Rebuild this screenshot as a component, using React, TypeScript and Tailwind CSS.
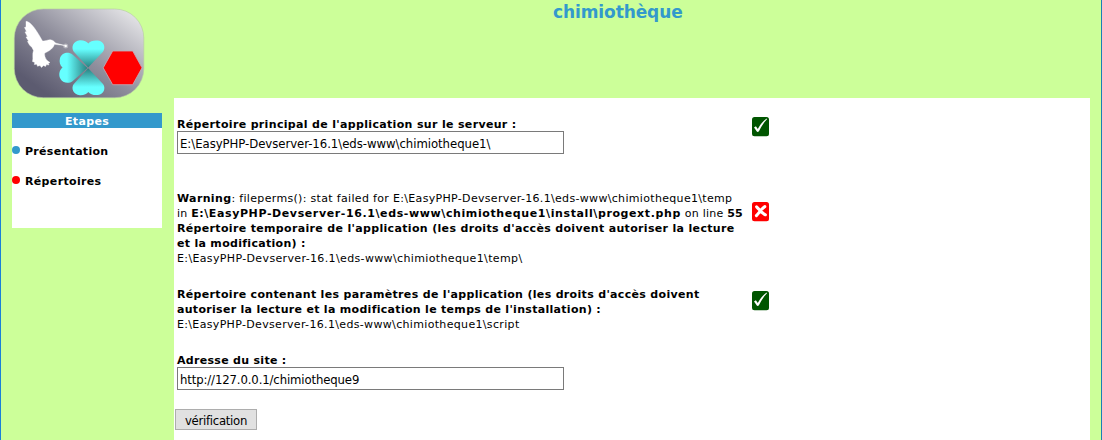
import type { ReactNode } from "react";

function Line({ children, className = "" }: { children: ReactNode; className?: string }) {
  return <div className={`h-[15px] whitespace-pre leading-[15px] ${className}`}>{children}</div>;
}

function CheckIcon() {
  return (
    <svg width="17" height="20" viewBox="0 0 17 20" className="block">
      <rect width="17" height="19.3" rx="2.5" fill="#005500" />
      <path d="M2 10.4 L3.9 9.2 L5.8 12 C8 7.8 11 4 14.6 1.6 L15 2.2 C11.6 5.8 9 9.8 6.8 14.6 L5.2 14.9 Z" fill="#fff" />
    </svg>
  );
}

function CrossIcon() {
  return (
    <svg width="17" height="20" viewBox="0 0 17 20" className="block">
      <rect width="17" height="19.3" rx="2.5" fill="#ff0000" />
      <path d="M4.6 4.8 C7 7 9.500 11 13.400 12.800 M12.800 4.600 C9.500 6.500 7.500 10.500 4.400 13.600" stroke="#fff" strokeWidth="3" strokeLinecap="round" fill="none" />
    </svg>
  );
}

function Logo() {
  return (
    <svg width="133" height="92" viewBox="12 8 133 92" className="block">
      <defs>
        <linearGradient id="back" x1="0.15" y1="0.85" x2="0.95" y2="0.1">
          <stop offset="0" stopColor="#5c5b70" />
          <stop offset="0.45" stopColor="#8f8e9c" />
          <stop offset="1" stopColor="#e2e2e5" />
        </linearGradient>
        <linearGradient id="top" gradientUnits="userSpaceOnUse" x1="88" y1="67" x2="88" y2="49">
          <stop offset="0" stopColor="#2b8484" />
          <stop offset="1" stopColor="#66ffff" />
        </linearGradient>
        <linearGradient id="bottom" gradientUnits="userSpaceOnUse" x1="88" y1="69" x2="88" y2="87">
          <stop offset="0" stopColor="#2b8484" />
          <stop offset="1" stopColor="#66ffff" />
        </linearGradient>
        <linearGradient id="left" gradientUnits="userSpaceOnUse" x1="87" y1="68" x2="67" y2="68">
          <stop offset="0" stopColor="#2b8484" />
          <stop offset="1" stopColor="#66ffff" />
        </linearGradient>
      </defs>
      <rect x="14.3" y="9" width="129.5" height="88.7" rx="29" fill="url(#back)" stroke="#b5c7a4" strokeWidth="0.6" />
      <path d="M26 21.3 C31 21.5 37 31 42.500 41 C45 41.500 48 39.500 50.500 39.800 C53 40 54.500 41.800 55.500 43 L65 45.500 L54.500 44.300 C52.500 50 48 51 44.500 53.500 C44.500 58 47 61 50 62.500 L48.300 63.400 L49 65 L46.500 64.600 L45.500 66.500 L43.500 65.500 L41.500 67.500 L40 65.500 L37.500 66.300 L36.800 64.200 L34.300 64.500 L34.800 62.400 L32.500 61.600 C33.500 58 32 54 33.500 50.500 L32 47.500 L29.500 45 L27.500 41.500 L28.500 41 L26 37 L27.500 36.800 L25 32 L26.500 31.600 L24.500 27.500 L26 27 Z" fill="#fff" stroke="#fff" strokeWidth="0.4" />
      <circle cx="65.7" cy="46" r="2.5" fill="#fff" fillOpacity="0.35" />
      <circle cx="65.7" cy="46" r="1.2" fill="#fff" />
      <path d="M88.2 67.500 L73.600 51.500 C71 47.500 73 41 80 40.300 C84 40.200 87 41.500 88.300 43.500 C90 41.200 94 40 98 40.600 C104 41.500 106 47.500 103 51.700 Z" fill="url(#top)" />
      <path d="M88.2 68.300 L73.600 84.300 C71 88.300 73 94.500 80 95.200 C84 95.300 87 94 88.300 92 C90 94.300 94 95.500 98 95 C104 94 106 88 103 84 Z" fill="url(#bottom)" />
      <path d="M87.5 67.900 L72.500 54.500 C69 51.500 62 52 60 58 C59 62 60 65.500 62.500 67.500 C59.500 70 58.500 74 60 78 C62.500 83.500 69 84 72.500 81.200 Z" fill="url(#left)" />
      <path d="M103.2 67.800 L112.700 51 H132.700 L142 67.800 L132.700 84.700 H112.700 Z" fill="#ff0000" stroke="#c3afb9" strokeWidth="0.8" />
    </svg>
  );
}

function Step({ color, children, className }: { color: string; children: string; className: string }) {
  return (
    <div className="flex h-[15px] items-center">
      <span className={`mr-[5px] mb-px h-2 w-2 rounded-full ${color}`} />
      <Line className={`pt-px font-bold ${className}`}>{children}</Line>
    </div>
  );
}

export default function App() {
  return (
    <div className="flex h-[440px] w-full overflow-hidden border-r border-l border-r-[#1a80b4] border-l-[#1a80d8] bg-[#ccff99] font-['DejaVu_Sans',sans-serif] text-[11px] text-black">
      <aside className="w-[173px] shrink-0 pl-[11px]">
        <div className="h-[113px] w-[133px] pt-2">
          <Logo />
        </div>
        <nav className="h-[115px] w-[150px] bg-white">
          <Line className="bg-[#3399cc] pt-px text-center font-bold tracking-[0.35px] text-white">Etapes</Line>
          <div className="flex flex-col gap-[15px] pt-[15px]">
            <Step color="bg-[#3399cc]" className="tracking-[0.3px]">Présentation</Step>
            <Step color="bg-[#ff0000]" className="tracking-[0.34px]">Répertoires</Step>
          </div>
        </nav>
      </aside>

      <div className="flex w-[916px] shrink-0 flex-col">
        <header className="h-[98px] pl-[379px]">
          <h1 className="pt-px text-[17px] leading-[22px] font-bold tracking-[-0.1px] text-[#3399cc]">chimiothèque</h1>
        </header>
        <main className="grow bg-white pt-[19px] pl-[3px]">
          <section className="flex h-[74px]">
            <div className="w-[575px]">
              <Line className="font-bold tracking-[0.333px]">Répertoire principal de l'application sur le serveur :</Line>
              <input
                className="mt-[-1px] block h-[23px] w-[387px] border border-[#7a7a7a] bg-white px-[2px] pt-[2px] font-['DejaVu_Sans_Condensed','DejaVu_Sans',sans-serif] text-[13px] tracking-[-0.04px] [font-stretch:condensed]"
                defaultValue={"E:\\EasyPHP-Devserver-16.1\\eds-www\\chimiotheque1\\"}
              />
            </div>
            <CheckIcon />
          </section>

          <section className="flex h-24">
            <div className="w-[575px]">
              <Line>
                <b className="tracking-[0.36px]">Warning</b>
                <span className="tracking-[0.325px]">{": fileperms(): stat failed for E:\\EasyPHP-Devserver-16.1\\eds-www\\chimiotheque1\\temp"}</span>
              </Line>
              <Line>
                <span className="tracking-[0.2px]">{"in "}</span>
                <b className="tracking-[0.605px]">{"E:\\EasyPHP-Devserver-16.1\\eds-www\\chimiotheque1\\install\\progext.php"}</b>
                <span className="tracking-[0.27px]">{" on line "}</span>
                <b className="tracking-[0.1px]">55</b>
              </Line>
              <Line className="font-bold tracking-[0.333px]">Répertoire temporaire de l'application (les droits d'accès doivent autoriser la lecture</Line>
              <Line className="font-bold tracking-[0.3px]">et la modification) :</Line>
              <Line className="tracking-[0.362px]">{"E:\\EasyPHP-Devserver-16.1\\eds-www\\chimiotheque1\\temp\\"}</Line>
            </div>
            <div className="pt-[11px]">
              <CrossIcon />
            </div>
          </section>

          <section className="flex h-[66px]">
            <div className="w-[575px]">
              <Line className="font-bold tracking-[0.325px]">Répertoire contenant les paramètres de l'application (les droits d'accès doivent</Line>
              <Line className="font-bold tracking-[0.3px]">autoriser la lecture et la modification le temps de l'installation) :</Line>
              <Line className="tracking-[0.335px]">{"E:\\EasyPHP-Devserver-16.1\\eds-www\\chimiotheque1\\script"}</Line>
            </div>
            <div className="pt-1">
              <CheckIcon />
            </div>
          </section>

          <section className="h-14">
            <Line className="font-bold tracking-[0.3px]">Adresse du site :</Line>
            <input
              className="mt-[-1px] block h-[23px] w-[387px] border border-[#7a7a7a] bg-white px-[2px] pt-[2px] font-['DejaVu_Sans_Condensed','DejaVu_Sans',sans-serif] text-[13px] tracking-[-0.13px] [font-stretch:condensed]"
              defaultValue="http://127.0.0.1/chimiotheque9"
            />
          </section>

          <button className="-ml-0.5 block h-[21px] w-[82px] border border-[#adadad] bg-[#e1e1e1] pt-[2px] font-['DejaVu_Sans_Condensed','DejaVu_Sans',sans-serif] text-[13px] leading-[17px] tracking-[-0.28px]">
            vérification
          </button>
        </main>
      </div>
    </div>
  );
}
